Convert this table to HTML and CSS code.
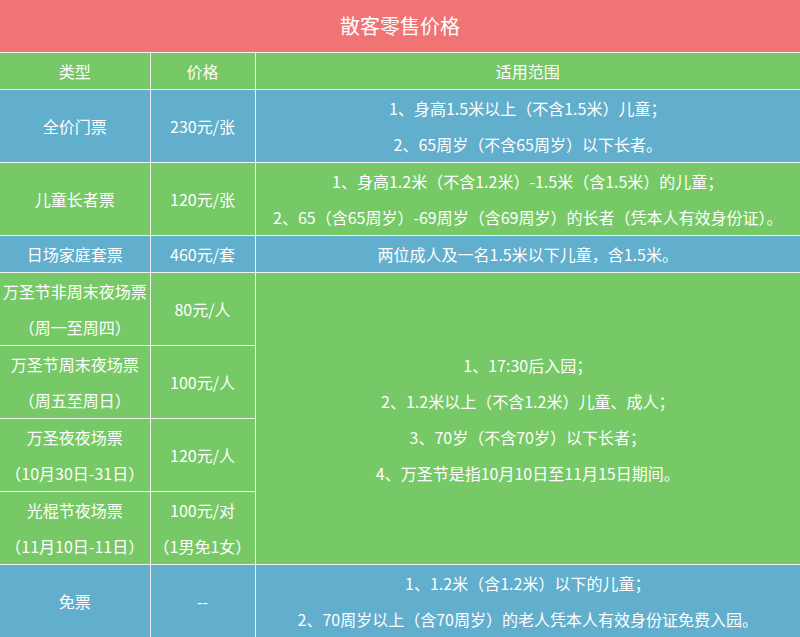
FILE: index.html
```html
<!DOCTYPE html>
<html lang="zh-CN">
<head>
<meta charset="utf-8">
<title>散客零售价格</title>
<link rel="stylesheet" href="styles.css">
</head>
<body>
<div class="price-board">
  <div class="board-title">散客零售价格</div>
  <table class="price-table">
    <colgroup>
      <col class="col-type">
      <col class="col-price">
      <col class="col-scope">
    </colgroup>
    <thead>
      <tr class="row-green">
        <th>类型</th>
        <th>价格</th>
        <th>适用范围</th>
      </tr>
    </thead>
    <tbody>
      <tr class="row-blue">
        <td>全价门票</td>
        <td>230元/张</td>
        <td>1、身高1.5米以上（不含1.5米）儿童；<br>2、65周岁（不含65周岁）以下长者。</td>
      </tr>
      <tr class="row-green">
        <td>儿童长者票</td>
        <td>120元/张</td>
        <td>1、身高1.2米（不含1.2米）-1.5米（含1.5米）的儿童；<br>2、65（含65周岁）-69周岁（含69周岁）的长者（凭本人有效身份证）。</td>
      </tr>
      <tr class="row-blue">
        <td>日场家庭套票</td>
        <td>460元/套</td>
        <td>两位成人及一名1.5米以下儿童，含1.5米。</td>
      </tr>
      <tr class="row-green">
        <td>万圣节非周末夜场票<br>（周一至周四）</td>
        <td>80元/人</td>
        <td rowspan="4">1、17:30后入园；<br>2、1.2米以上（不含1.2米）儿童、成人；<br>3、70岁（不含70岁）以下长者；<br>4、万圣节是指10月10日至11月15日期间。</td>
      </tr>
      <tr class="row-green">
        <td>万圣节周末夜场票<br>（周五至周日）</td>
        <td>100元/人</td>
      </tr>
      <tr class="row-green">
        <td>万圣夜夜场票<br>（10月30日-31日）</td>
        <td>120元/人</td>
      </tr>
      <tr class="row-green">
        <td>光棍节夜场票<br>（11月10日-11日）</td>
        <td>100元/对<br>（1男免1女）</td>
      </tr>
      <tr class="row-blue">
        <td>免票</td>
        <td>--</td>
        <td>1、1.2米（含1.2米）以下的儿童；<br>2、70周岁以上（含70周岁）的老人凭本人有效身份证免费入园。</td>
      </tr>
    </tbody>
  </table>
</div>
</body>
</html>
```

FILE: styles.css
```css
html, body {
  margin: 0;
  padding: 0;
  overflow: hidden;
}

body {
  width: 800px;
  height: 637px;
  font-family: "Noto Sans CJK SC", "Noto Sans", sans-serif;
  color: #ffffff;
}

.price-board {
  width: 800px;
}

.board-title {
  height: 52px;
  line-height: 52px;
  background: #f07474;
  border-bottom: 1px solid #f1f1f1;
  text-align: center;
  font-size: 20px;
}

.price-table {
  width: 800px;
  border-collapse: collapse;
  border-style: hidden;
  table-layout: fixed;
  font-size: 16px;
}

.col-type { width: 150px; }
.col-price { width: 105px; }

.price-table th,
.price-table td {
  border: 1px solid #f1f1f1;
  padding: 0;
  height: 36px;
  line-height: 36px;
  text-align: center;
  vertical-align: middle;
  font-weight: normal;
  white-space: nowrap;
  overflow: hidden;
}

.row-green { background: #76c966; }
.row-blue { background: #62aecd; }
```
